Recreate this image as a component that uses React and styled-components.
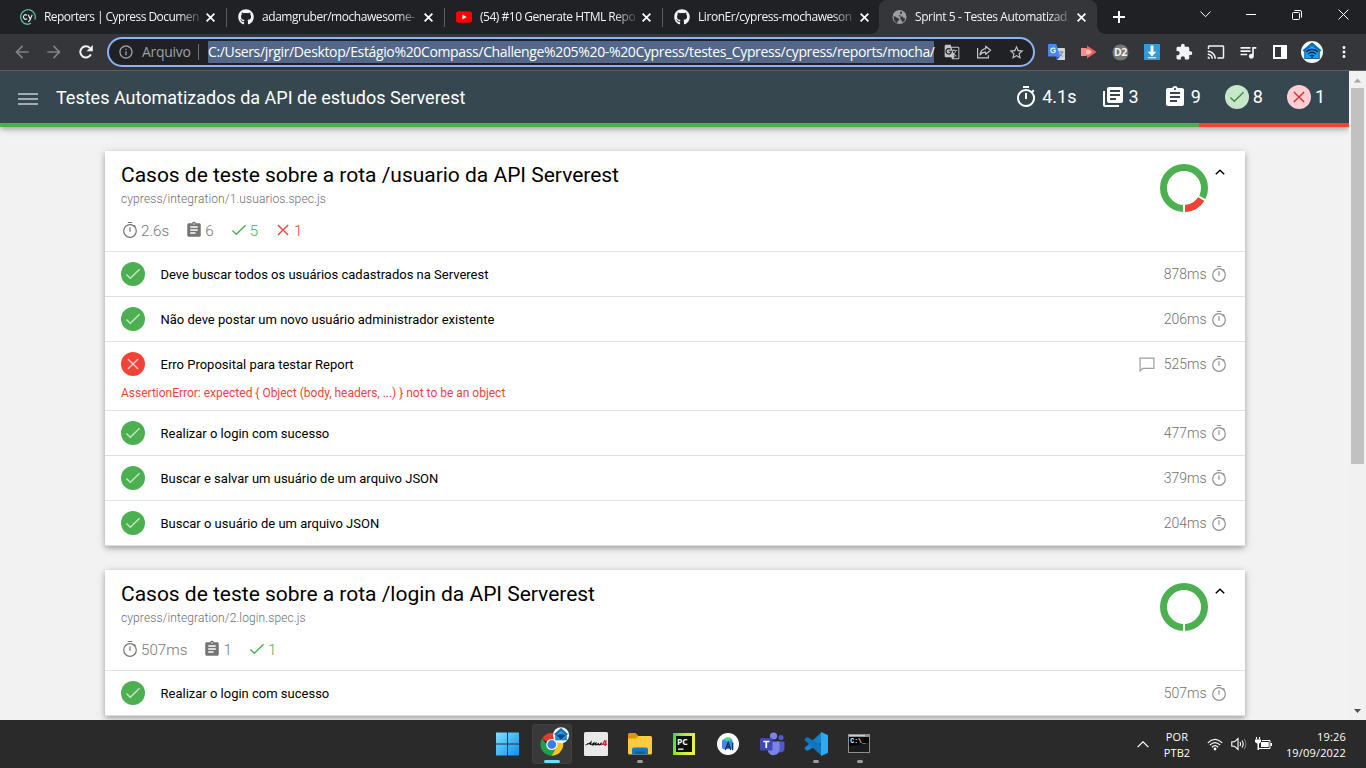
import React from "react";
import styled, { createGlobalStyle, css } from "styled-components";
import {
  MdOutlineTimer, MdLibraryBooks, MdAssignment, MdGTranslate, MdStarBorder,
  MdExtension, MdCast, MdQueueMusic, MdMoreVert, MdArrowBack, MdArrowForward,
  MdInfoOutline,
} from "react-icons/md";
import { FaGithub } from "react-icons/fa";

const GlobalStyle = createGlobalStyle`
  * { box-sizing: border-box; }
  body { margin: 0; overflow: hidden; background: #f2f2f2; }
  svg { display: block; flex: none; }
`;

const ui = css`font-family: "Open Sans", "Noto Sans", sans-serif;`;

const Screen = styled.div`
  width: 1366px;
  height: 768px;
  display: flex;
  flex-direction: column;
  overflow: hidden;
  font-family: Roboto, sans-serif;
`;

/* ---------- browser chrome ---------- */
const TabStrip = styled.div`
  ${ui}
  height: 34px;
  background: #202124;
  display: flex;
  padding-left: 7px;
  flex: none;
`;
const Tab = styled.div`
  width: 218px;
  height: 34px;
  display: flex;
  align-items: center;
  padding: 0 5px 0 13px;
  color: #f1f3f4;
  background: ${(p) => (p.$active ? "#35363a" : "transparent")};
  border-radius: 8px 8px 0 0;
  position: relative;
  &::after {
    content: "";
    position: absolute;
    right: -2px;
    top: 8px;
    width: 1px;
    height: 19px;
    background: ${(p) => (p.$divider ? "#5b5d61" : "transparent")};
  }
  ${(p) => p.$active && css`
    padding-right: 6px;
    &::before, &::after {
      content: "";
      position: absolute;
      top: auto;
      bottom: 0;
      width: 8px;
      height: 8px;
    }
    &::before {
      left: -8px;
      background: radial-gradient(circle at 0 0, transparent 7.5px, #35363a 8px);
    }
    &::after {
      right: -8px;
      background: radial-gradient(circle at 100% 0, transparent 7.5px, #35363a 8px);
    }
  `}
`;
const TabTitle = styled.span`
  flex: none;
  width: 155px;
  margin-left: 8px;
  white-space: nowrap;
  font-size: 12px;
  line-height: 18px;
  letter-spacing: ${(p) => p.$ls}px;
  mask-image: linear-gradient(to right, #000 134px, rgba(0, 0, 0, 0.15) 156px);
`;
const CloseButton = styled.span`
  margin-left: auto;
  width: 20px;
  display: flex;
  justify-content: center;
`;
const NewTab = styled.div`
  width: 43px;
  display: flex;
  align-items: center;
  justify-content: center;
`;
const WindowControls = styled.div`
  margin-left: auto;
  display: flex;
  height: 29px;
`;
const WindowButton = styled.div`
  width: 46px;
  display: flex;
  align-items: center;
  justify-content: center;
`;
const Toolbar = styled.div`
  ${ui}
  height: 37px;
  background: #35363a;
  border-bottom: 1px solid #5f6064;
  display: flex;
  align-items: center;
  padding-left: 6px;
  flex: none;
`;
const NavButton = styled.div`
  width: 32px;
  height: 32px;
  display: flex;
  align-items: center;
  justify-content: center;
  color: ${(p) => (p.$on ? "#f1f3f4" : "#7f8184")};
`;
const Omnibox = styled.div`
  width: 928px;
  height: 30px;
  margin-left: 5px;
  border: 2px solid #8ab4f8;
  border-radius: 15px;
  background: #202124;
  display: flex;
  align-items: center;
  padding: 0 1px 0 9px;
  color: #9aa0a6;
`;
const Scheme = styled.span`
  width: 57px;
  height: 16px;
  line-height: 15px;
  margin: 0 9px 0 8px;
  border-right: 1px solid #6b6e72;
  font-size: 14px;
  letter-spacing: -0.3px;
`;
const Url = styled.span`
  width: 726px;
  height: 22px;
  line-height: 21px;
  background: #536889;
  color: #fff;
  font-size: 14px;
  letter-spacing: ${(p) => p.$ls}px;
  white-space: nowrap;
`;
const OmniIcons = styled.div`
  display: flex;
  margin-left: auto;
`;
const IconCell = styled.div`
  width: 32px;
  height: 24px;
  display: flex;
  align-items: center;
  justify-content: center;
  color: ${(p) => (p.$dim ? "#c0c3c7" : "#f1f3f4")};
`;
const Extensions = styled.div`
  display: flex;
  margin-left: 5px;
`;

/* ---------- report page ---------- */
const Viewport = styled.div`
  flex: 1;
  min-height: 0;
  display: flex;
  background: #f2f2f2;
`;
const Page = styled.main`
  width: 1349px;
  overflow: hidden;
`;
const NavBar = styled.header`
  height: 56px;
  box-shadow: 0 2px 5px rgba(0, 0, 0, 0.26), 0 2px 10px rgba(0, 0, 0, 0.12);
`;
const NavContent = styled.div`
  height: 52px;
  background: #37474f;
  display: flex;
  align-items: center;
  padding: 0 24px 0 18px;
`;
const Burger = styled.div`
  width: 20px;
  height: 12px;
  margin-top: 4px;
  border-top: 2px solid #a3abaf;
  border-bottom: 2px solid #a3abaf;
  display: flex;
  align-items: center;
  &::before {
    content: "";
    width: 100%;
    height: 2px;
    background: #a3abaf;
  }
`;
const ReportTitle = styled.h1`
  margin: 1px 0 0 18px;
  color: #fff;
  font-size: 18px;
  font-weight: 400;
  line-height: 24px;
`;
const Summary = styled.div`
  display: flex;
  gap: 24px;
  margin: 0 0 0 auto;
`;
const SummaryItem = styled.div`
  display: flex;
  align-items: center;
  gap: 4px;
  color: #fff;
  font-size: 18px;
  line-height: 24px;
`;
const Ratio = styled.div`
  height: 4px;
  display: flex;
  background: #f44336;
  &::before {
    content: "";
    width: 1199px;
    background: #4caf50;
  }
`;
const Badge = styled.span`
  width: 24px;
  height: 24px;
  border-radius: 50%;
  flex: none;
  display: flex;
  align-items: center;
  justify-content: center;
  background: ${(p) => p.$bg};
  color: ${(p) => p.$fg};
`;
const Suites = styled.div`
  width: 1140px;
  margin: 24px 0 0 105px;
  display: flex;
  flex-direction: column;
  gap: 24px;
`;
const Card = styled.section`
  background: #fff;
  box-shadow: 0 2px 5px rgba(0, 0, 0, 0.26), 0 2px 10px rgba(0, 0, 0, 0.12);
`;
const CardHeader = styled.div`
  height: 101px;
  border-bottom: 1px solid #e0e0e0;
  display: flex;
  padding: 12px 16px 0;
`;
const Heading = styled.div`
  flex: 1;
`;
const SuiteTitle = styled.h2`
  margin: 0;
  font-size: 21px;
  font-weight: 400;
  line-height: 24px;
  letter-spacing: -0.015px;
  color: #000;
`;
const SpecPath = styled.div`
  font-size: 12px;
  font-weight: 300;
  line-height: 16px;
  margin-top: 4px;
  color: #6d6d6d;
  letter-spacing: 0.105px;
`;
const Stats = styled.div`
  display: flex;
  gap: 16px;
  margin-top: 14px;
`;
const Stat = styled.div`
  display: flex;
  align-items: center;
  gap: 2px;
  height: 20px;
  font-size: 15.2px;
  font-weight: 300;
  color: ${(p) => p.$color || "#757575"};
  svg { margin-top: -2px; }
`;
const ChartArea = styled.div`
  display: flex;
  gap: 6.5px;
  margin: 0 4.5px 0 0;
  padding-top: 1px;
`;
const TestRow = styled.div`
  min-height: 45px;
  border-bottom: 1px solid #e0e0e0;
  padding: 10px 17px 0 16px;
`;
const TestLine = styled.div`
  display: flex;
  align-items: center;
  height: 24px;
`;
const TestName = styled.span`
  margin-left: 15.5px;
  font-size: 13px;
  color: #000;
`;
const Timing = styled.span`
  margin-left: auto;
  display: flex;
  align-items: center;
  font-size: 14px;
  font-weight: 300;
  color: #909090;
  span { margin: 0 3.5px 0 8px; color: #6f6f6f; }
`;
const ErrorText = styled.p`
  margin: 0;
  padding: 10px 0 9px;
  font-size: 12px;
  line-height: 15px;
  color: #f44336;
  letter-spacing: -0.01px;
`;
const Scrollbar = styled.div`
  width: 17px;
  background: #f1f1f1;
  display: flex;
  flex-direction: column;
  align-items: center;
  padding: 7px 0;
`;
const Thumb = styled.div`
  width: 13px;
  height: 376px;
  margin: 5px 0 auto;
  background: #c1c1c1;
`;

/* ---------- task bar ---------- */
const Taskbar = styled.footer`
  ${ui}
  height: 48px;
  flex: none;
  background: #2a2a2a;
  display: flex;
  align-items: stretch;
  padding: 0 20px 0 486px;
  color: #fff;
`;
const TaskItem = styled.div`
  width: 40px;
  height: 40px;
  margin: 4px 2px;
  border-radius: 4px;
  background: ${(p) => (p.$active ? "#393939" : "transparent")};
  box-shadow: ${(p) => (p.$active ? "inset 0 0 0 1px #404040" : "none")};
  display: flex;
  align-items: center;
  justify-content: center;
  position: relative;
  &::after {
    content: "";
    position: absolute;
    bottom: 1px;
    left: 50%;
    transform: translateX(-50%);
    height: 3px;
    border-radius: 2px;
    width: ${(p) => (p.$active ? 16 : p.$open ? 6 : 0)}px;
    background: ${(p) => (p.$active ? "#6fdcff" : "#9d9d9d")};
  }
`;
const Tray = styled.div`
  margin-left: auto;
  display: flex;
  align-items: center;
`;
const TrayText = styled.div`
  font-size: 11px;
  line-height: 16px;
  text-align: ${(p) => p.$align};
  width: ${(p) => p.$w}px;
  letter-spacing: ${(p) => p.$ls}px;
  padding-top: 1px;
`;
const TrayIcons = styled.div`
  display: flex;
  align-items: center;
  gap: 7px;
  margin-left: 2px;
  svg:first-child { margin-right: 1px; }
`;

/* ---------- drawings ---------- */
const Cross = ({ s = 9, c = "#fff", w = 1.7 }) => (
  <svg width={s} height={s} viewBox={`0 0 ${s} ${s}`}>
    <path d={`M.6.6 ${s - 0.6} ${s - 0.6}M${s - 0.6}.6.6 ${s - 0.6}`} stroke={c} strokeWidth={w} fill="none" />
  </svg>
);
const PlusIcon = () => (
  <svg width="12" height="12" viewBox="0 0 12 12">
    <path d="M6 0v12M0 6h12" stroke="#fff" strokeWidth="2" />
  </svg>
);
const ReloadIcon = () => (
  <svg width="14" height="14" viewBox="0 0 14 14">
    <path d="M11.900 9.400A5.600 5.600 0 1 1 11 3.100" fill="none" stroke="#f1f3f4" strokeWidth="2" />
    <path d="M13.800 0v6.200H7.600z" fill="#f1f3f4" />
  </svg>
);
const CypressIcon = () => (
  <svg width="16" height="16" viewBox="0 0 16 16">
    <path d="M4 14.1A7.3 7.3 0 1 1 14.8 10.6 M4 14.1Q8 16.5 11 14" fill="none" stroke="#5bbd94" strokeWidth="1.3" />
    <path d="M7.1 6.3a2.2 2.2 0 1 0 0 3.3M8.3 5.8l1.800 4.200M12.200 5.800l-2.200 5.300q-.6 1.400-2 1.200" fill="none" stroke="#e8e8e8" strokeWidth="1.2" />
  </svg>
);
const YoutubeIcon = () => (
  <svg width="16" height="16" viewBox="0 0 16 16">
    <rect y="2.3" width="16" height="11.4" rx="2.8" fill="#f00" />
    <path d="M6.4 5.6v4.8L10.6 8z" fill="#fff" />
  </svg>
);
const GlobeIcon = () => (
  <svg width="15" height="16" viewBox="0 0 15 16">
    <circle cx="7.5" cy="8" r="7" fill="#9aa0a6" />
    <path d="M1.600 7.300Q3.500 7 5 8.800q2 .2 2.300 1.700-.3 1.300-1.600 1.700l-.4 2Q1.600 12.700 1.600 7.300zM8.300 2.300q1.400.2 2 1.200-.2 1.500-1.700 1.600-.5 1.400-2 1.300l1.200 1.300 2.700-.2 1.300 1.700 1.700.3Q13 12 10.600 13.300l-.8-1.600-1.400-1.500" fill="#35363a" />
  </svg>
);
const HouseAvatar = ({ size = 22 }) => (
  <svg width={size} height={size} viewBox="0 0 22 22">
    <circle cx="11" cy="11" r="11" fill="#f4f7fa" />
    <path d="M11 1.200 1.600 9.300l1.600 1.800V18h15.600v-6.900l1.600-1.800z" fill="#1767a8" />
    <path d="M11 4.200 4.400 10V17h13.200v-7z" fill="#14a0f4" />
    <path d="M5.200 10.800Q11 6.200 16.800 10.800M7 12.900Q11 9.600 15 12.900M8.800 14.900Q11 13.200 13.200 14.900" fill="none" stroke="#0a2550" strokeWidth="1.300" />
    <circle cx="11" cy="16.300" r="1" fill="#0a2550" />
  </svg>
);
const ShareIcon = () => (
  <svg width="16" height="16" viewBox="0 0 16 16" fill="none" stroke="#c4c7cb" strokeWidth="1.2">
    <path d="M1.600 4v9.900h10.800v-2.600" />
    <path d="M9.700 2.200 14.600 6.300 9.700 10.400V8.100C6.800 8 5.200 9 4 10.900 4.400 7.300 6.300 5 9.700 4.600z" strokeLinejoin="round" />
  </svg>
);
const TranslateExt = () => (
  <svg width="17" height="17" viewBox="0 0 17 17">
    <path d="M7 4h9a1 1 0 0 1 1 1v11H9z" fill="#d3d6da" />
    <path d="M0 1a1 1 0 0 1 1-1h7.200l4 12.500H1a1 1 0 0 1-1-1z" fill="#4687f4" />
    <path d="M7.500 12.500h4.700L9 16z" fill="#2a56c6" />
    <path d="M7.300 5.200A2.400 2.400 0 1 0 7.200 7.800V6.500H5.400" fill="none" stroke="#fff" strokeWidth="1.1" />
    <path d="M10.800 8h4.600M13 7v1M14.600 8q-.8 2.800-3 4M11.800 9.600q1.200 2 3 3" fill="none" stroke="#6b7f9c" strokeWidth=".9" />
  </svg>
);
const RedArrowExt = () => (
  <svg width="17" height="14" viewBox="0 0 17 14">
    <path d="M1 3h6V.5L16.500 7 7 13.500V11H1z" fill="#f0605d" />
    <path d="M1 3h5v8H1z" fill="#fa8e8b" />
    <path d="M6 4.500h3l3 2.500-3 2.500H6z" fill="#ffc4c1" />
  </svg>
);
const GreyExt = () => (
  <svg width="17" height="17" viewBox="0 0 17 17">
    <circle cx="8.5" cy="8.5" r="8" fill="#777" />
    <text x="8.3" y="12.2" fontSize="10.5" fontWeight="700" letterSpacing="-.5" fontFamily="Open Sans, sans-serif" fill="#f2f2f2" textAnchor="middle">D2</text>
  </svg>
);
const DownloadExt = () => (
  <svg width="16" height="16" viewBox="0 0 16 16">
    <path fill="#3498db" d="M0 0h16v16H0z" />
    <path d="M6.600 1.500h2.800v6.300h3L8 12.500 3.600 7.800h3zM4 13.300h8v1H4z" fill="#fff" />
  </svg>
);
const SidePanel = () => (
  <svg width="14" height="14" viewBox="0 0 14 14">
    <path d="M0 0h14v14H0zM2 2v10h6V2z" fill="#fff" fillRule="evenodd" />
  </svg>
);
const ThinTimer = () => (
  <svg width="18" height="18" viewBox="0 0 18 18" fill="none" stroke="currentColor" strokeWidth="1.2">
    <circle cx="9" cy="10" r="6.300" />
    <path d="M6.800 1.500h4.400M9 6.200v4.500M13.200 4.300l1.300 1.300" />
  </svg>
);
const CommentIcon = () => (
  <svg width="18" height="18" viewBox="0 0 18 18" fill="none" stroke="#9e9e9e" strokeWidth="1.2">
    <path d="M2.100 16V3.100h13.800v10.300H4.700z" />
  </svg>
);
const SmallCheck = () => (
  <svg width="18" height="18" viewBox="0 0 18 18" fill="none" stroke="currentColor" strokeWidth="1.4">
    <path d="M2.400 9.400 6.300 13.200 15.600 4.300" />
  </svg>
);
const SmallCross = () => (
  <svg width="18" height="18" viewBox="0 0 18 18" fill="none" stroke="currentColor" strokeWidth="1.350">
    <path d="M3.900 3.900 14.100 14.100M14.100 3.900 3.900 14.100" />
  </svg>
);
const Donut = ({ failed }) => (
  <svg width="48" height="48" viewBox="0 0 48 48">
    <circle cx="24" cy="24" r="20.500" fill="none" stroke="#4caf50" strokeWidth="7" />
    {failed && <path d="M24 44.500A20.500 20.500 0 0 0 41.750 34.250" fill="none" stroke="#f44336" strokeWidth="7" />}
    <path d="M24 38v10" stroke="#fff" strokeWidth="2" />
    {failed && <path d="M36.120 31 45.500 36.400" stroke="#fff" strokeWidth="2" />}
  </svg>
);
const CaretBox = styled.div`
  padding-top: 5px;
`;
const Caret = () => (
  <CaretBox>
    <svg width="10" height="6" viewBox="0 0 10 6">
      <path d="M.8 5.200 5 1.200 9.200 5.200" fill="none" stroke="#000" strokeWidth="1.500" />
    </svg>
  </CaretBox>
);

/* task bar icons */
const WindowsIcon = () => (
  <svg width="24" height="24" viewBox="0 0 24 24">
    <defs>
      <linearGradient id="win" x1="0" y1="0" x2="1" y2="1">
        <stop stopColor="#7fe0ff" /><stop offset="1" stopColor="#0a91f2" />
      </linearGradient>
    </defs>
    <path d="M0 .5h11v11H0zM12 .5h11v11H12zM0 12.500h11v11H0zM12 12.500h11v11H12z" fill="url(#win)" />
  </svg>
);
const ChromeIcon = () => (
  <svg width="32" height="32" viewBox="0 0 32 32" overflow="visible">
    <path d="M16 16.500 6 10.600A11.300 11.300 0 0 1 25.800 11H16z" fill="#e33b2e" />
    <path d="M16 16.500h-5.500L6 10.600A11.300 11.300 0 0 0 15.500 27.700l5-8.500z" fill="#1fa04a" />
    <path d="M16 11h9.800A11.300 11.300 0 0 1 15.500 27.700l5-8.500z" fill="#fbc31c" />
    <circle cx="15.800" cy="16.500" r="5.600" fill="#fff" />
    <circle cx="15.800" cy="16.500" r="4.400" fill="#3b7ded" />
    <g transform="translate(17 -.8) scale(.73)">
      <circle cx="11" cy="11" r="11" fill="#f4f7fa" />
      <path d="M11 1.200 1.600 9.300l1.600 1.800V18h15.600v-6.900l1.600-1.800z" fill="#1767a8" />
      <path d="M11 4.600 4.600 10.600V17h12.800v-6.400z" fill="#14a0f4" />
      <path d="M5 11.500Q11 7 17 11.500L11 17z" fill="#0a3b78" />
    </g>
  </svg>
);
const MuIcon = () => (
  <svg width="24" height="24" viewBox="0 0 24 24">
    <rect width="24" height="24" rx="1.500" fill="#e9e9e9" />
    <path d="M1.500 13q3-.3 5.500-3l-.6 3M3 11.700h4.500M7.500 13l2.300-2-.5 2 2.700-2-.3 2q2 0 2.800-1.800-.3 2 .8 1.700 1.500-.3 2-2.300l-.4 2.500" stroke="#111" strokeWidth="1.100" fill="none" />
    <path d="M21.200 8 18.700 12.300h4.300M22 8.500l-.8 5.500" stroke="#d22b35" strokeWidth="1.400" fill="none" />
  </svg>
);
const FolderIcon = () => (
  <svg width="24" height="24" viewBox="0 0 24 24">
    <path d="M0 2.500A1.500 1.500 0 0 1 1.500 1h6l3 3H22v6H0z" fill="#d99600" />
    <path d="M0 6.500h8l2.500-2.500H22.500A1.500 1.500 0 0 1 24 5.500v15.500a1.500 1.500 0 0 1-1.500 1.500h-21A1.500 1.500 0 0 1 0 21z" fill="#fccb3f" />
    <path d="M4 22.500v-5a2 2 0 0 1 2-2h12a2 2 0 0 1 2 2v5z" fill="#1278c8" />
    <path d="M7 19.500h10v2H7z" fill="#0b5a9c" />
  </svg>
);
const PyCharmIcon = () => (
  <svg width="22" height="22" viewBox="0 0 22 22">
    <defs>
      <linearGradient id="pyc" x1="0" y1="0" x2="1" y2=".3">
        <stop stopColor="#21d75a" /><stop offset=".4" stopColor="#a6e629" /><stop offset="1" stopColor="#f0f04c" />
      </linearGradient>
    </defs>
    <path fill="url(#pyc)" d="M0 0h22v22H0z" />
    <path fill="#08120a" d="M3 3h16v16H3z" />
    <text x="4" y="11.500" fontSize="8.500" fontWeight="700" fontFamily="Open Sans, sans-serif" fill="#fff">PC</text>
    <path d="M5 15.500h5.500v1.300H5z" fill="#fff" />
  </svg>
);
const AndroidIcon = () => (
  <svg width="22" height="22" viewBox="0 0 22 22">
    <circle cx="11" cy="11" r="11" fill="#fff" />
    <path d="M6.500 8A4.500 3.800 0 0 1 15.500 8z" fill="#3ddc84" />
    <rect x="5" y="6.500" width="10.500" height="9.500" rx="1.500" fill="#4285f4" />
    <path d="M7 7A4 3.500 0 0 1 14.500 7.500L11 8.500z" fill="#3ddc84" />
    <path d="M8.300 17 11.200 9.500l2.600 7.500M9.500 14h3.500M15.700 9.500v7.800" stroke="#0b2f55" strokeWidth="1.300" fill="none" />
  </svg>
);
const TeamsIcon = () => (
  <svg width="25" height="24" viewBox="0 0 25 24">
    <circle cx="21" cy="5.500" r="2.600" fill="#5059c9" />
    <path d="M17 9.500h7.500v7a4 4 0 0 1-6.500 3z" fill="#5059c9" />
    <circle cx="13.500" cy="4" r="3.600" fill="#7b83eb" />
    <path d="M8 9.500h11.500v8a6 6 0 0 1-11.500 2z" fill="#7b83eb" />
    <rect x="0" y="6" width="12.500" height="12.500" rx="1.200" fill="#4048b5" />
    <path d="M3.200 9.500h6.200M6.300 9.500v6.500" stroke="#fff" strokeWidth="1.700" />
  </svg>
);
const CodeIcon = () => (
  <svg width="24" height="24" viewBox="0 0 24 24">
    <path d="M17.500.3 24 3.200v4L3.200 18.900 1 17.200q-.9-.9 0-1.800z" fill="#1583c9" />
    <path d="M17.500 23.700 24 20.800v-4L3.200 5.100 1 6.800q-.9.900 0 1.800z" fill="#0f75bd" />
    <path d="M17.500.3 24 3.200v17.600l-6.500 2.900q-.5-.2-.5-1V1.300q0-.8.5-1z" fill="#2ea8f0" />
  </svg>
);
const TerminalIcon = () => (
  <svg width="22" height="19" viewBox="0 0 22 19" overflow="visible">
    <g transform="translate(-1 -1)">
      <path fill="#8d9092" d="M0 0h22v19H0z" />
      <path fill="#050505" d="M1 3h20v15H1z" />
      <path fill="#c9cdd0" d="M1 1h16v1.200H1z" />
      <path fill="#303234" d="M1 18V12q8 0 20-4v10z" opacity=".5" />
      <text x="2.300" y="9" fontSize="6.500" fontWeight="700" fontFamily="Liberation Mono, monospace" fill="#eee">C:\_</text>
    </g>
  </svg>
);
const WifiIcon = () => (
  <svg width="16" height="13" viewBox="0 0 16 13" fill="none" stroke="#fff" strokeWidth="1.2">
    <path d="M.8 4.900Q8-2.100 15.200 4.900M2.800 7.100Q8 2.100 13.200 7.100M4.900 9.200Q8 6.200 11.100 9.200" />
    <circle cx="8" cy="11" r="1.400" fill="#fff" stroke="none" />
  </svg>
);
const SpeakerIcon = () => (
  <svg width="17" height="14" viewBox="0 0 17 14" fill="none" stroke="#fff" strokeWidth="1.1">
    <path d="M.8 4.800h2.700L7 1.500v11L3.500 9.200H.8z" />
    <path d="M9 5q1.300 2 0 4M11 3.500q2.400 3.500 0 7" />
    <path d="M13.200 2q3.500 5 0 10" stroke="#777" />
  </svg>
);
const BatteryIcon = () => (
  <svg width="17" height="14" viewBox="0 0 17 14">
    <path d="M1.500 0v2.500M4.500 0v2.500" stroke="#fff" strokeWidth="1.100" />
    <path d="M0 2.500h6V5L4 6.800V13H2.500V6.800L0 5z" fill="#fff" />
    <path d="M7 3.500h8v8H4" fill="none" stroke="#fff" />
    <path d="M6 5h7.700v5H6zM15.500 6H17v3h-1.500z" fill="#fff" />
  </svg>
);

/* ---------- data ---------- */
const tabs = [
  { icon: <CypressIcon />, title: "Reporters | Cypress Documen", ls: -0.54 },
  { icon: <FaGithub size={16} />, title: "adamgruber/mochawesome-", ls: -0.44 },
  { icon: <YoutubeIcon />, title: "(54) #10 Generate HTML Repo", ls: -0.48 },
  { icon: <FaGithub size={16} />, title: "LironEr/cypress-mochaweson", ls: -0.44 },
  { icon: <GlobeIcon />, title: "Sprint 5 - Testes Automatizad", ls: -0.4 },
];
const suites = [
  {
    title: "Casos de teste sobre a rota /usuario da API Serverest",
    file: "cypress/integration/1.usuarios.spec.js",
    time: "2.6s", total: 6, passed: 5, failed: 1,
    tests: [
      { name: "Deve buscar todos os usuários cadastrados na Serverest", ms: "878ms" },
      { name: "Não deve postar um novo usuário administrador existente", ms: "206ms" },
      {
        name: "Erro Proposital para testar Report", ms: "525ms",
        error: "AssertionError: expected { Object (body, headers, ...) } not to be an object",
      },
      { name: "Realizar o login com sucesso", ms: "477ms" },
      { name: "Buscar e salvar um usuário de um arquivo JSON", ms: "379ms" },
      { name: "Buscar o usuário de um arquivo JSON", ms: "204ms" },
    ],
  },
  {
    title: "Casos de teste sobre a rota /login da API Serverest",
    file: "cypress/integration/2.login.spec.js",
    time: "507ms", total: 1, passed: 1, failed: 0,
    tests: [{ name: "Realizar o login com sucesso", ms: "507ms" }],
  },
];
const extensions = [
  <TranslateExt />, <RedArrowExt />, <GreyExt />, <DownloadExt />, <MdExtension size={18} />,
  <MdCast size={18} />, <MdQueueMusic size={20} />, <SidePanel />, <HouseAvatar />, <MdMoreVert size={18} />,
];
const apps = [
  { icon: <WindowsIcon /> },
  { icon: <ChromeIcon />, active: true },
  { icon: <MuIcon /> },
  { icon: <FolderIcon />, open: true },
  { icon: <PyCharmIcon /> },
  { icon: <AndroidIcon /> },
  { icon: <TeamsIcon /> },
  { icon: <CodeIcon />, open: true },
  { icon: <TerminalIcon />, open: true },
];

const Test = ({ test }) => (
  <TestRow>
    <TestLine>
      {test.error ? (
        <Badge $bg="#f44336" $fg="#ffcdd2"><SmallCross /></Badge>
      ) : (
        <Badge $bg="#4caf50" $fg="#c8e6c9"><SmallCheck /></Badge>
      )}
      <TestName>{test.name}</TestName>
      <Timing>
        {test.error && <CommentIcon />}
        <span>{test.ms}</span>
        <ThinTimer />
      </Timing>
    </TestLine>
    {test.error && <ErrorText>{test.error}</ErrorText>}
  </TestRow>
);

const Suite = ({ suite }) => (
  <Card>
    <CardHeader>
      <Heading>
        <SuiteTitle>{suite.title}</SuiteTitle>
        <SpecPath>{suite.file}</SpecPath>
        <Stats>
          <Stat><ThinTimer />{suite.time}</Stat>
          <Stat><MdAssignment size={18} />{suite.total}</Stat>
          <Stat $color="#4caf50"><SmallCheck />{suite.passed}</Stat>
          {suite.failed > 0 && <Stat $color="#f44336"><SmallCross />{suite.failed}</Stat>}
        </Stats>
      </Heading>
      <ChartArea>
        <Donut failed={suite.failed > 0} />
        <Caret />
      </ChartArea>
    </CardHeader>
    {suite.tests.map((t) => <Test key={t.name} test={t} />)}
  </Card>
);

export default function App() {
  return (
    <Screen>
      <GlobalStyle />
      <TabStrip>
        {tabs.map((t, i) => (
          <Tab key={t.title} $active={i === 4} $divider={i < 3}>
            {t.icon}
            <TabTitle $ls={t.ls}>{t.title}</TabTitle>
            <CloseButton><Cross /></CloseButton>
          </Tab>
        ))}
        <NewTab><PlusIcon /></NewTab>
        <WindowControls>
          <WindowButton>
            <svg width="11" height="7" viewBox="0 0 11 7"><path d="M.5.5 5.500 5.700 10.500.5" fill="none" stroke="#fff" /></svg>
          </WindowButton>
          <WindowButton>
            <svg width="10" height="1" viewBox="0 0 10 1"><path d="M0 .5h10" stroke="#fff" /></svg>
          </WindowButton>
          <WindowButton>
            <svg width="10" height="10" viewBox="0 0 10 10" fill="none" stroke="#fff">
              <rect x=".5" y="2.500" width="7" height="7" rx="1" /><path d="M2.500.5H8A1.500 1.500 0 0 1 9.500 2v5.500" />
            </svg>
          </WindowButton>
          <WindowButton><Cross s={11} w={1} /></WindowButton>
        </WindowControls>
      </TabStrip>
      <Toolbar>
        <NavButton><MdArrowBack size={20} /></NavButton>
        <NavButton><MdArrowForward size={20} /></NavButton>
        <NavButton $on><ReloadIcon /></NavButton>
        <Omnibox>
          <MdInfoOutline size={16} />
          <Scheme>Arquivo</Scheme>
          <Url $ls={-0.355}>C:/Users/jrgir/Desktop/Estágio%20Compass/Challenge%205%20-%20Cypress/testes_Cypress/cypress/reports/mocha/</Url>
          <OmniIcons>
            <IconCell $dim><MdGTranslate size={16} /></IconCell>
            <IconCell $dim><ShareIcon /></IconCell>
            <IconCell $dim><MdStarBorder size={17} /></IconCell>
          </OmniIcons>
        </Omnibox>
        <Extensions>
          {extensions.map((e, i) => <IconCell key={i}>{e}</IconCell>)}
        </Extensions>
      </Toolbar>
      <Viewport>
        <Page>
          <NavBar>
            <NavContent>
              <Burger />
              <ReportTitle>Testes Automatizados da API de estudos Serverest</ReportTitle>
              <Summary>
                <SummaryItem><MdOutlineTimer size={24} />4.1s</SummaryItem>
                <SummaryItem><MdLibraryBooks size={24} />3</SummaryItem>
                <SummaryItem><MdAssignment size={24} />9</SummaryItem>
                <SummaryItem><Badge $bg="#c8e6c9" $fg="#388e3c"><SmallCheck /></Badge>8</SummaryItem>
                <SummaryItem><Badge $bg="#ffcdd2" $fg="#d32f2f"><SmallCross /></Badge>1</SummaryItem>
              </Summary>
            </NavContent>
            <Ratio />
          </NavBar>
          <Suites>
            {suites.map((s) => <Suite key={s.title} suite={s} />)}
          </Suites>
        </Page>
        <Scrollbar>
          <svg width="7" height="5" viewBox="0 0 7 5"><path d="M0 4.500 3.500.5 7 4.500z" fill="#a3a3a3" /></svg>
          <Thumb />
          <svg width="7" height="4" viewBox="0 0 7 4"><path d="M0 0h7L3.500 4z" fill="#505050" /></svg>
        </Scrollbar>
      </Viewport>
      <Taskbar>
        {apps.map((a, i) => <TaskItem key={i} $active={a.active} $open={a.open}>{a.icon}</TaskItem>)}
        <Tray>
          <svg width="12" height="7" viewBox="0 0 12 7"><path d="M.6 6.200 6 .8l5.400 5.400" fill="none" stroke="#fff" strokeWidth="1.2" /></svg>
          <TrayText $w={56} $align="center" $ls={0.1}>POR<br />PTB2</TrayText>
          <TrayIcons><WifiIcon /><SpeakerIcon /><BatteryIcon /></TrayIcons>
          <TrayText $w={74} $align="right" $ls={0.17}>19:26<br />19/09/2022</TrayText>
        </Tray>
      </Taskbar>
    </Screen>
  );
}
